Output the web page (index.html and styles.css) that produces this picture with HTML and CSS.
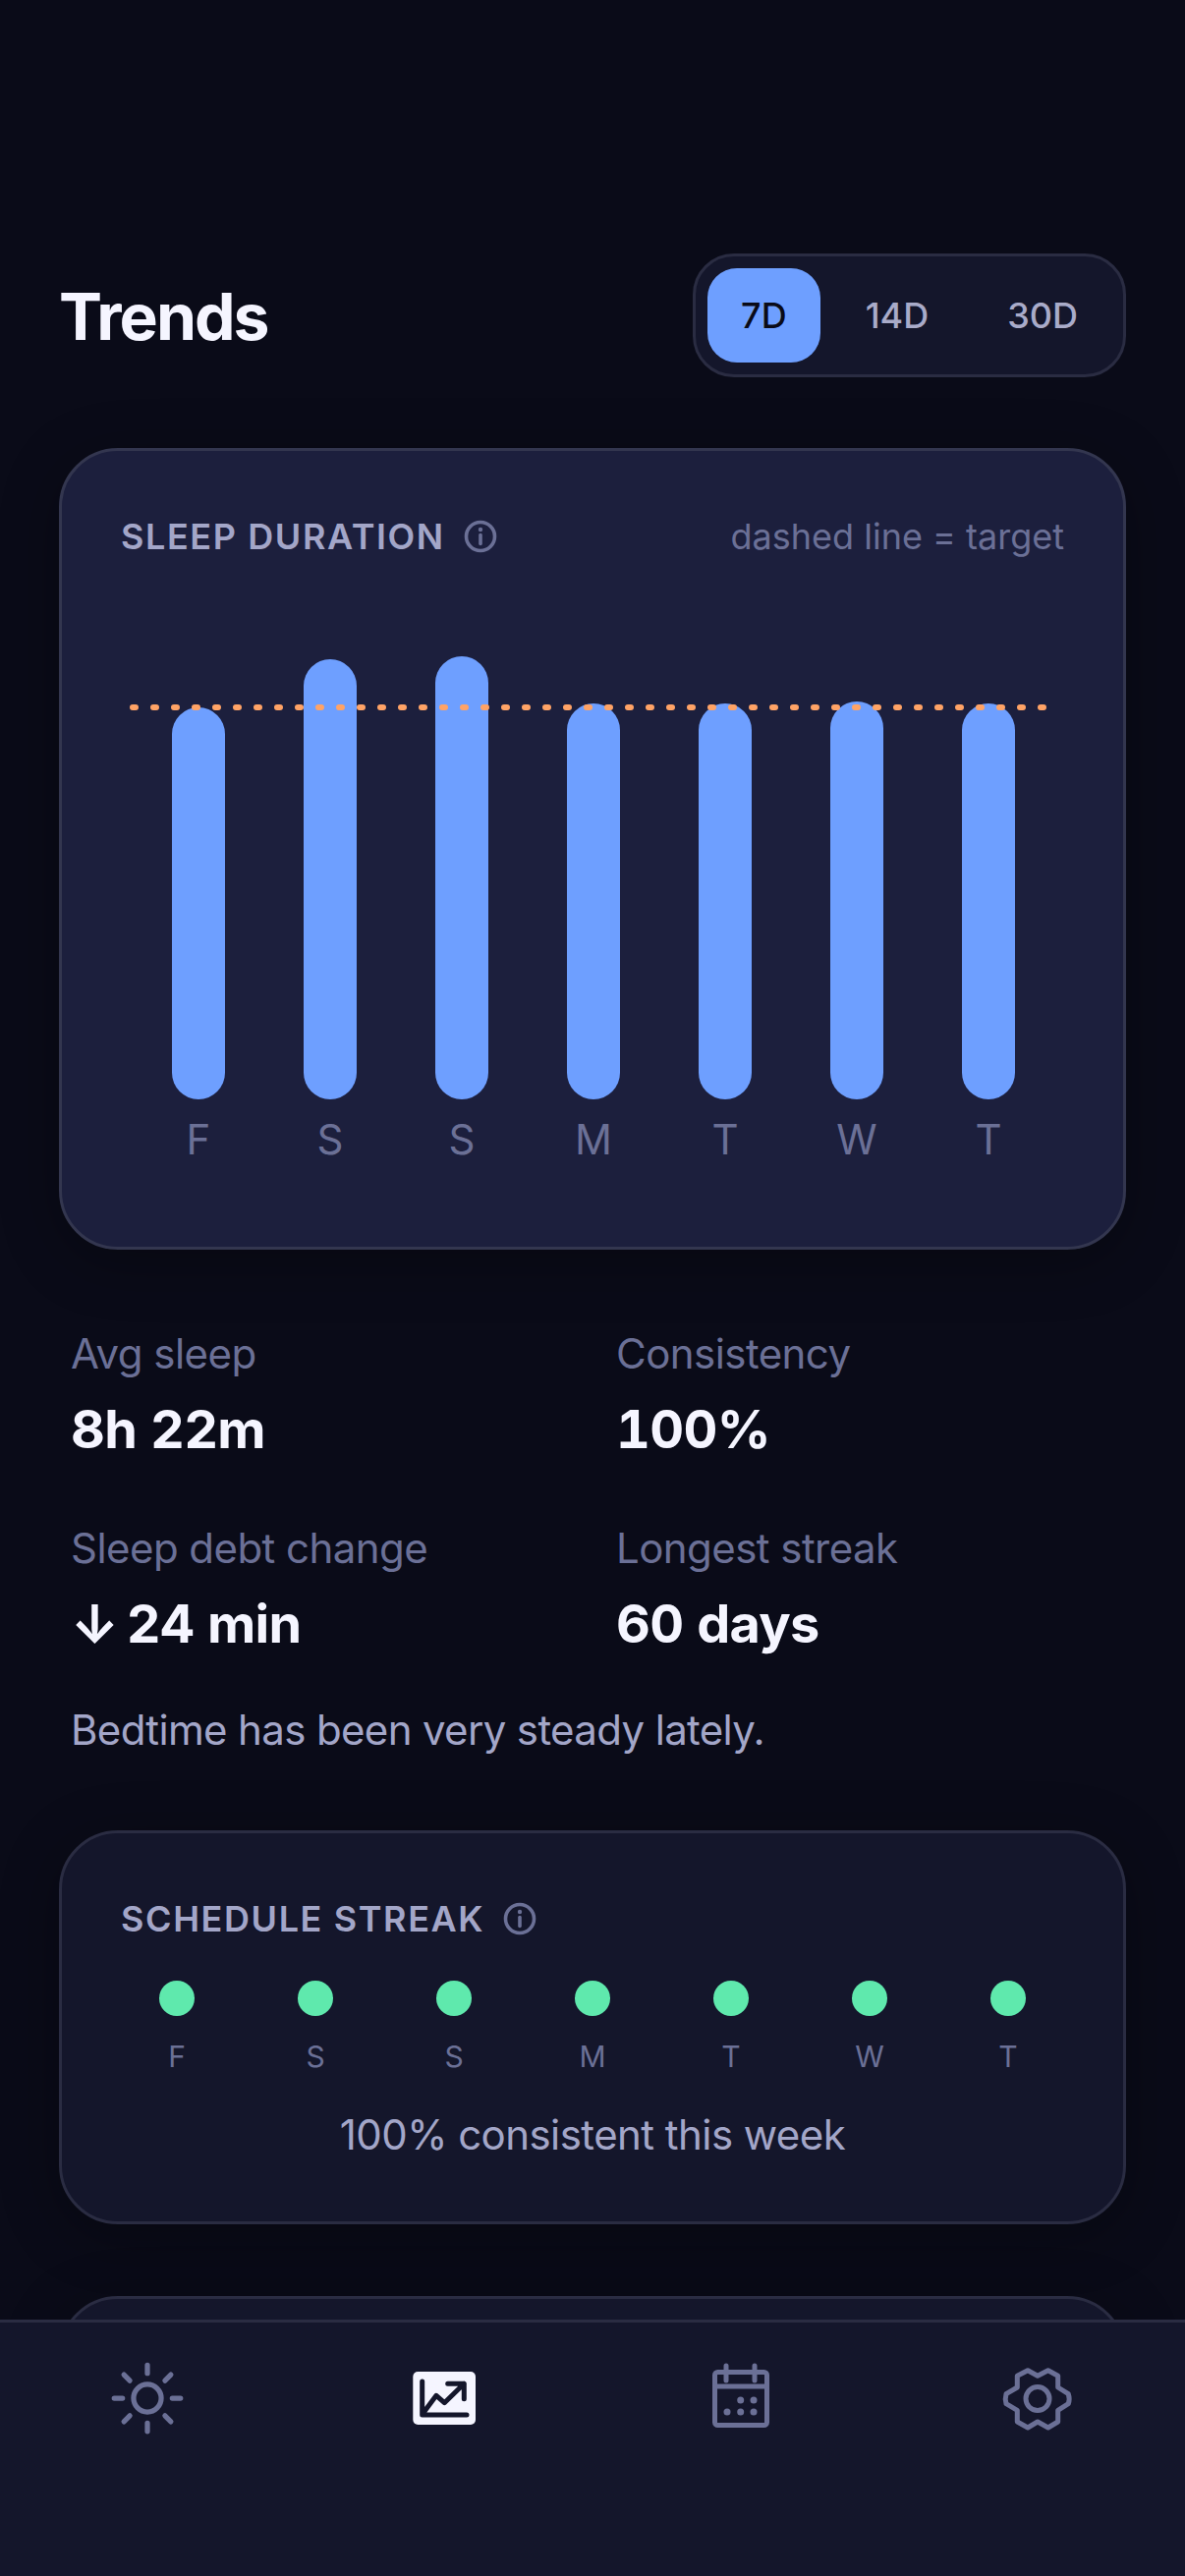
FILE: index.html
```html
<!DOCTYPE html>
<html lang="en">
<head>
    <meta charset="UTF-8">
    <meta name="viewport" content="width=device-width, initial-scale=1.0">
    <title>Trends</title>

    <link rel="stylesheet" href="styles.css">
</head>
<body>
    <main class="content">
        <header class="header">
            <h1 class="title">Trends</h1>
            <div class="range">
                <span class="rangeItem active">7D</span>
                <span class="rangeItem">14D</span>
                <span class="rangeItem">30D</span>
            </div>
        </header>

        <section class="card cardDuration">
            <div class="cardHead">
                <h2 class="cardTitle">SLEEP DURATION</h2>
                <svg class="info" viewBox="0 0 36 36">
                    <circle cx="18" cy="18" r="14.5"/>
                    <path d="M18 16.5v9"/>
                    <circle class="infoDot" cx="18" cy="11" r="2.2"/>
                </svg>
                <span class="cardHint">dashed line = target</span>
            </div>
            <div class="chart">
                <div class="bars">
                    <div class="col"><div class="bar" style="height: 399px"></div></div>
                    <div class="col"><div class="bar" style="height: 448px"></div></div>
                    <div class="col"><div class="bar" style="height: 451px"></div></div>
                    <div class="col"><div class="bar" style="height: 403px"></div></div>
                    <div class="col"><div class="bar" style="height: 403px"></div></div>
                    <div class="col"><div class="bar" style="height: 405px"></div></div>
                    <div class="col"><div class="bar" style="height: 403px"></div></div>
                    <svg class="target" height="6">
                        <line x1="0" y1="3" x2="930" y2="3"/>
                    </svg>
                </div>
                <div class="days">
                    <span>F</span><span>S</span><span>S</span><span>M</span><span>T</span><span>W</span><span>T</span>
                </div>
            </div>
        </section>

        <section class="stats">
            <div class="stat">
                <div class="statLabel">Avg sleep</div>
                <div class="statValue">8h 22m</div>
            </div>
            <div class="stat">
                <div class="statLabel">Consistency</div>
                <div class="statValue">100%</div>
            </div>
            <div class="stat">
                <div class="statLabel">Sleep debt change</div>
                <div class="statValue"><span class="arrow">↓</span> 24 min</div>
            </div>
            <div class="stat">
                <div class="statLabel">Longest streak</div>
                <div class="statValue">60 days</div>
            </div>
        </section>
        <p class="note">Bedtime has been very steady lately.</p>

        <section class="card cardStreak">
            <div class="cardHead">
                <h2 class="cardTitle">SCHEDULE STREAK</h2>
                <svg class="info" viewBox="0 0 36 36">
                    <circle cx="18" cy="18" r="14.5"/>
                    <path d="M18 16.5v9"/>
                    <circle class="infoDot" cx="18" cy="11" r="2.2"/>
                </svg>
            </div>
            <div class="streak">
                <div class="streakDay"><i class="dot"></i><span>F</span></div>
                <div class="streakDay"><i class="dot"></i><span>S</span></div>
                <div class="streakDay"><i class="dot"></i><span>S</span></div>
                <div class="streakDay"><i class="dot"></i><span>M</span></div>
                <div class="streakDay"><i class="dot"></i><span>T</span></div>
                <div class="streakDay"><i class="dot"></i><span>W</span></div>
                <div class="streakDay"><i class="dot"></i><span>T</span></div>
            </div>
            <p class="streakText">100% consistent this week</p>
        </section>

        <section class="card cardNext"></section>
    </main>

    <nav class="nav">
        <svg class="navIcon" viewBox="0 0 24 24">
            <path d="M12 3v2.25m6.364.386-1.591 1.591M21 12h-2.25m-.386 6.364-1.591-1.591M12 18.75V21m-4.773-4.227-1.591 1.591M5.25 12H3m4.227-4.773L5.636 5.636M15.75 12a3.75 3.75 0 1 1-7.5 0 3.75 3.75 0 0 1 7.5 0Z"/>
        </svg>
        <svg class="navIcon navActive" viewBox="0 0 90 90">
            <rect class="chartBox" x="13.3" y="18" width="63.7" height="54" rx="5"/>
            <path d="M22.7 28v34h45.3M25.3 58 37 42.3l8.3 7.4 20-19.4M48.7 30.3h16.6v15.4"/>
        </svg>
        <svg class="navIcon navThick" viewBox="0 0 90 90">
            <rect x="18.5" y="18.5" width="53" height="54" rx="3"/>
            <path d="M30 12v15M59 12v15M18.5 33h53"/>
            <g class="calDots">
                <circle cx="44.7" cy="47" r="3.5"/>
                <circle cx="58" cy="47" r="3.5"/>
                <circle cx="31" cy="59" r="3.5"/>
                <circle cx="44.7" cy="59" r="3.5"/>
                <circle cx="58" cy="59" r="3.5"/>
            </g>
        </svg>
        <svg class="navIcon navThick" viewBox="0 0 90 90">
            <path d="M35 16.7 45 22.3 55.7 16.7 65.7 22.3V34L76.3 40.7Q78 45.7 76.3 50.7L65.7 57.3V69L55.7 75 45 69 35 75 24.3 69V57.3L13 50.7Q11.5 45.7 13 40.7L24.3 34V22.3Z"/>
            <circle cx="45" cy="45.6" r="12"/>
        </svg>
    </nav>
</body>
</html>
```

FILE: styles.css
```css
*{
    box-sizing: border-box;
}
body{
    margin: 0;
    width: 1206px;
    height: 2622px;
    overflow: hidden;
    display: flex;
    flex-direction: column;
    background: #0a0b18;
    color: #f5f5ff;
    font-family: Inter, "Liberation Sans", sans-serif;
}
h1, h2, p{
    margin: 0;
}
.content{
    flex: 1;
    min-height: 0;
    overflow: hidden;
    padding: 258px 60px 0;
}

.header{
    display: flex;
    justify-content: space-between;
    align-items: center;
}
.title{
    margin-top: 2px;
    font-size: 66px;
    font-weight: 700;
    letter-spacing: -2px;
}
.range{
    display: flex;
    gap: 12px;
    padding: 12px;
    background: #14162b;
    border: 3px solid #2a2c42;
    border-radius: 42px;
}
.rangeItem{
    height: 96px;
    padding: 0 34px;
    display: flex;
    align-items: center;
    border-radius: 30px;
    font-size: 36px;
    font-weight: 500;
    color: #a9abc9;
}
.rangeItem.active{
    background: #6e9fff;
    color: #0a0b18;
}

.card{
    border: 3px solid #2a2c42;
    border-radius: 60px;
    background: #14162b;
    padding: 60px;
    box-shadow: 0 12px 60px rgba(0, 0, 0, 0.3);
}
.cardDuration{
    margin-top: 72px;
    background: #1c1f3d;
    border-color: #33364f;
}
.cardHead{
    display: flex;
    align-items: center;
    height: 54px;
}
.cardTitle{
    font-size: 36px;
    font-weight: 600;
    letter-spacing: 1.6px;
    color: #a3a6c8;
}
.cardHint{
    margin-left: auto;
    font-size: 36px;
    color: #6b7096;
}
.info{
    width: 36px;
    height: 36px;
    margin-left: 18px;
    fill: none;
    stroke: #6b7096;
    stroke-width: 3.6;
    stroke-linecap: round;
}
.infoDot{
    fill: #6b7096;
    stroke: none;
}

.chart{
    margin: 46px 0 24px;
}
.bars{
    position: relative;
    display: flex;
    height: 500px;
    margin-left: 12px;
}
.col{
    flex: 0 0 134px;
    display: flex;
    justify-content: center;
    align-items: flex-end;
}
.bar{
    width: 54px;
    background: #6e9fff;
    border-radius: 27px;
}
.target{
    position: absolute;
    left: 0;
    top: 98px;
    width: 100%;
    overflow: visible;
}
.target line{
    stroke: #ffa366;
    stroke-width: 6;
    stroke-linecap: round;
    stroke-dasharray: 3 18;
}
.days{
    display: flex;
    margin: 16px 0 0 12px;
    font-size: 42px;
    line-height: 50px;
    color: #6b7096;
}
.days span{
    flex: 0 0 134px;
    text-align: center;
}

.stats{
    display: grid;
    grid-template-columns: 1fr 1fr;
    gap: 62px 48px;
    padding: 80px 12px 0;
}
.statLabel{
    font-size: 42px;
    line-height: 51px;
    letter-spacing: -0.55px;
    color: #6b7096;
}
.statValue{
    margin-top: 19px;
    font-size: 54px;
    line-height: 66px;
    font-weight: 700;
    letter-spacing: -0.7px;
    font-variant-numeric: tabular-nums;
}
.arrow{
    letter-spacing: -6px;
}
.note{
    margin-top: 48px;
    padding: 0 12px;
    font-size: 42px;
    line-height: 54px;
    letter-spacing: -0.65px;
    color: #a3a6c8;
}

.cardStreak{
    margin-top: 75px;
    padding-bottom: 61px;
}
.streak{
    display: flex;
    justify-content: space-between;
    margin-top: 36px;
}
.streakDay{
    width: 114px;
    display: flex;
    flex-direction: column;
    align-items: center;
    gap: 23px;
    font-size: 30px;
    line-height: 36px;
    color: #6b7096;
}
.dot{
    width: 36px;
    height: 36px;
    border-radius: 50%;
    background: #5fe9ad;
}
.streakText{
    margin-top: 35px;
    text-align: center;
    font-size: 42px;
    line-height: 54px;
    letter-spacing: -0.55px;
    color: #a3a6c8;
}
.cardNext{
    margin-top: 73px;
    height: 300px;
}

.nav{
    height: 261px;
    flex: none;
    display: flex;
    justify-content: space-between;
    align-items: flex-start;
    padding: 32px 105px 0;
    background: #14162b;
    border-top: 3px solid #2a2c42;
}
.navIcon{
    width: 90px;
    height: 90px;
    fill: none;
    stroke: #6b7096;
    stroke-width: 1.4;
    stroke-linecap: round;
    stroke-linejoin: round;
}
.navThick{
    stroke-width: 5;
}
.calDots{
    fill: #6b7096;
    stroke: none;
}
.navActive{
    stroke: #14162b;
    stroke-width: 5;
}
.chartBox{
    fill: #f5f5ff;
    stroke: none;
}
```
